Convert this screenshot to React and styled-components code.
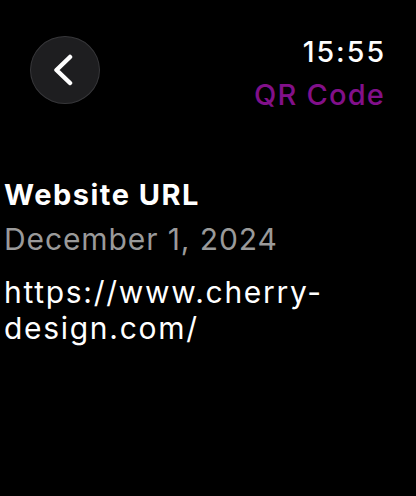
import { createGlobalStyle, styled } from "styled-components";

const GlobalStyle = createGlobalStyle`
  html, body {
    margin: 0;
    padding: 0;
    background: #000000;
  }
  body {
    font-family: Inter, "Noto Sans", sans-serif;
    color: #ffffff;
  }
`;

const Screen = styled.div`
  width: 416px;
  height: 496px;
  box-sizing: border-box;
  background: #000000;
  display: flex;
  flex-direction: column;
  overflow: hidden;
`;

const Header = styled.div`
  display: flex;
  justify-content: space-between;
  align-items: flex-start;
  padding: 35px 32px 0 30px;
`;

const BackButton = styled.button`
  margin-top: 1px;
  width: 70px;
  height: 68px;
  border-radius: 50%;
  border: 1.5px solid #37373a;
  background: #1e1e20;
  display: flex;
  align-items: center;
  justify-content: center;
  padding: 0 5px 0 0;
  cursor: pointer;
`;

const Status = styled.div`
  display: flex;
  flex-direction: column;
  align-items: flex-end;
`;

const Time = styled.div`
  font-size: 28.5px;
  font-weight: 500;
  line-height: 34px;
  letter-spacing: 2px;
  margin-right: -2px;
`;

const Title = styled.div`
  margin-top: 8px;
  font-size: 29px;
  font-weight: 500;
  line-height: 36px;
  letter-spacing: 1.2px;
  margin-right: -1px;
  color: #82108a;
`;

const Content = styled.div`
  display: flex;
  flex-direction: column;
  padding: 64px 4px 0 4px;
`;

const Heading = styled.div`
  font-size: 29px;
  font-weight: 700;
  line-height: 36px;
  letter-spacing: 1.5px;
`;

const DateText = styled.div`
  margin-top: 6px;
  font-size: 30px;
  font-weight: 400;
  line-height: 40px;
  letter-spacing: 0.9px;
  color: #9a9a9a;
`;

const Url = styled.div`
  margin-top: 15px;
  font-size: 30px;
  font-weight: 400;
  line-height: 36px;
  letter-spacing: 1.7px;
  width: 380px;
`;

export default function App() {
  return (
    <Screen>
      <GlobalStyle />
      <Header>
        <BackButton aria-label="Back">
          <svg width="22" height="32" viewBox="0 0 22 32" fill="none">
            <path
              d="M18 3 L4.5 16 L18 29"
              stroke="#ffffff"
              strokeWidth="4.5"
              strokeLinecap="round"
              strokeLinejoin="round"
            />
          </svg>
        </BackButton>
        <Status>
          <Time>15:55</Time>
          <Title>QR Code</Title>
        </Status>
      </Header>
      <Content>
        <Heading>Website URL</Heading>
        <DateText>December 1, 2024</DateText>
        <Url>https://www.cherry-design.com/</Url>
      </Content>
    </Screen>
  );
}
